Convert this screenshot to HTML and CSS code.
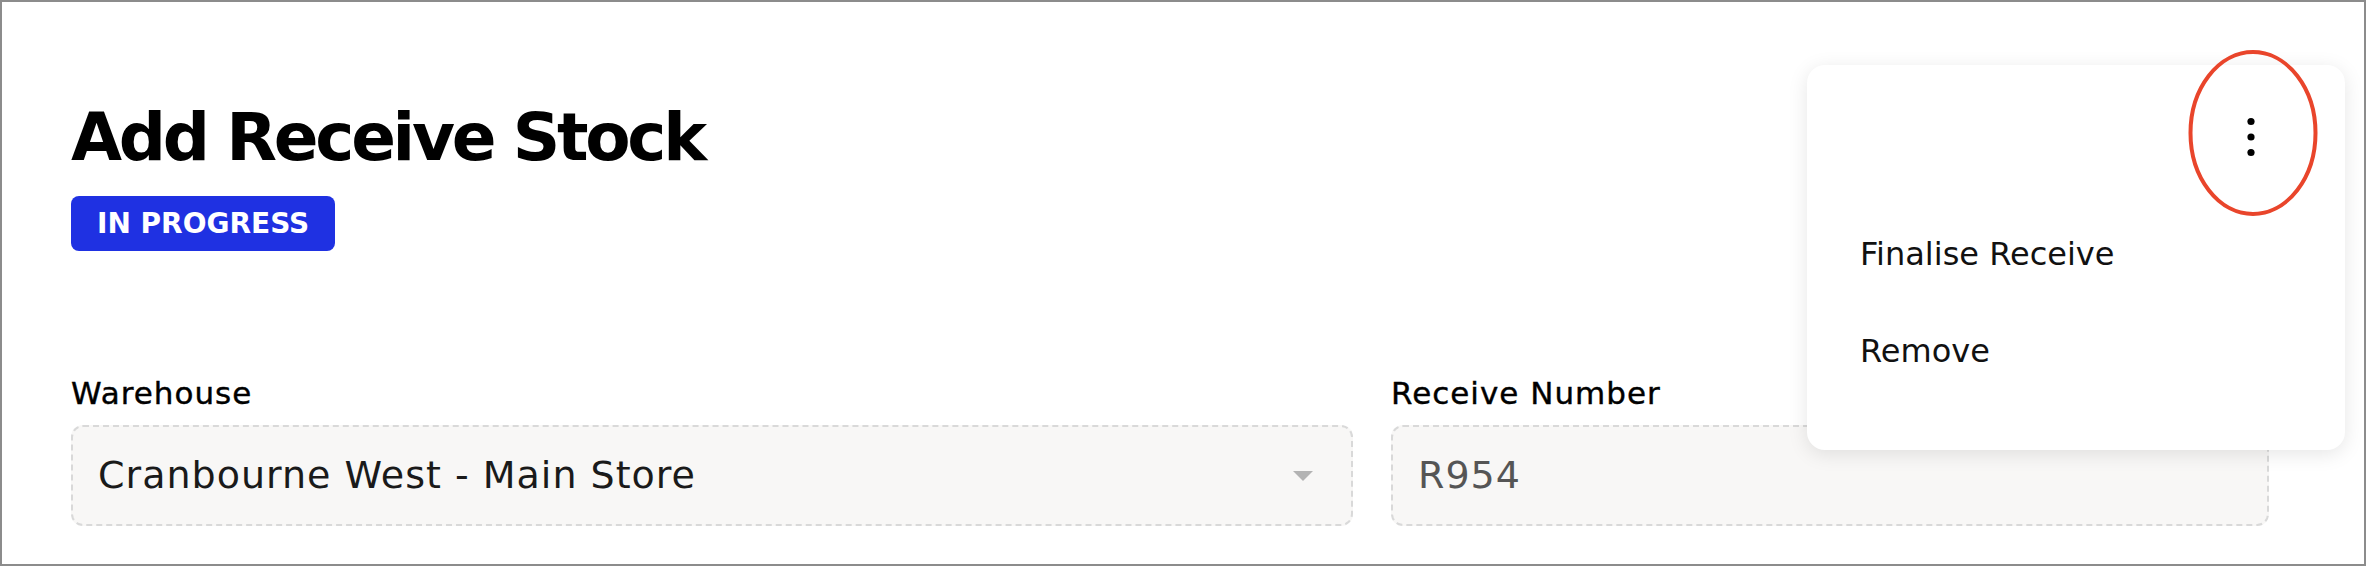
FILE: index.html
```html
<!DOCTYPE html>
<html lang="en">
<head>
    <meta charset="UTF-8">
    <meta name="viewport" content="width=device-width, initial-scale=1.0">
    <title>Add Receive Stock</title>
    <link rel="stylesheet" href="styles.css">
</head>
<body>
    <div class="page">
        <h1 class="page-title">Add Receive Stock</h1>
        <span class="status-badge">IN PROGRESS</span>

        <div class="form-row">
            <div class="field">
                <label class="field-label">Warehouse</label>
                <div class="field-box select-box">
                    <span class="field-value">Cranbourne West - Main Store</span>
                    <svg class="select-arrow" width="20" height="10" viewBox="0 0 20 10">
                        <path d="M0 0 H20 L10 10 Z" fill="#b3b3b3"/>
                    </svg>
                </div>
            </div>
            <div class="field">
                <label class="field-label">Receive Number</label>
                <div class="field-box">
                    <span class="field-value muted">R954</span>
                </div>
            </div>
        </div>

        <!-- actions dropdown, opened -->
        <div class="action-menu">
            <div class="menu-header">
                <button class="kebab" aria-label="More actions">
                    <svg width="28" height="46" viewBox="0 0 28 46">
                        <circle cx="14" cy="7.5" r="3.6" fill="#000"/>
                        <circle cx="14" cy="23" r="3.6" fill="#000"/>
                        <circle cx="14" cy="38.5" r="3.6" fill="#000"/>
                    </svg>
                </button>
            </div>
            <div class="menu-item">Finalise Receive</div>
            <div class="menu-item">Remove</div>
        </div>

        <!-- highlight ring around the kebab button -->
        <svg class="highlight-ring" width="136" height="172" viewBox="0 0 136 172">
            <ellipse cx="68" cy="86" rx="62.5" ry="81" fill="none" stroke="#e9452b" stroke-width="4"/>
        </svg>
    </div>
</body>
</html>
```

FILE: styles.css
```css
* {
    margin: 0;
    padding: 0;
    box-sizing: border-box;
}

body {
    font-family: 'DejaVu Sans', 'Noto Sans', sans-serif;
    background-color: #fff;
    color: #111;
}

.page {
    position: relative;
    width: 2366px;
    height: 566px;
    border: 2px solid #8c8c8c;
    padding: 103px 95px 0 69px;
    overflow: hidden;
}

.page-title {
    font-size: 66px;
    line-height: 66px;
    font-weight: bold;
    letter-spacing: -3.3px;
    color: #000;
}

.status-badge {
    display: inline-block;
    margin-top: 25px;
    height: 55px;
    line-height: 55px;
    padding: 0 26px;
    background-color: #1f31e2;
    color: #fff;
    font-size: 28px;
    font-weight: bold;
    border-radius: 8px;
}

.form-row {
    display: grid;
    grid-template-columns: 1282fr 878fr;
    gap: 38px;
    margin-top: 124px;
}

.field {
    display: flex;
    flex-direction: column;
    gap: 13px;
}

.field-label {
    font-size: 31px;
    line-height: 1.2;
    letter-spacing: 1px;
    color: #000;
    -webkit-text-stroke: 0.4px #000;
}

.field-box {
    display: flex;
    align-items: center;
    height: 101px;
    padding: 0 38px 0 25px;
    background-color: #f8f7f6;
    border: 2px dashed #d9d9d9;
    border-radius: 12px;
}

.select-box {
    justify-content: space-between;
}

.field-value {
    font-size: 38px;
    line-height: 1.2;
    letter-spacing: 1px;
    color: #1a1a1a;
}

.field-value.muted {
    color: #555;
}

.select-arrow {
    flex-shrink: 0;
}

.action-menu {
    position: absolute;
    top: 63px;
    left: 1805px;
    width: 538px;
    padding-bottom: 50px;
    background-color: #fff;
    border-radius: 18px;
    box-shadow: 0 4px 20px rgba(0, 0, 0, 0.1);
}

.menu-header {
    display: flex;
    justify-content: flex-end;
    align-items: center;
    height: 141px;
    padding: 3px 80px 0 0;
}

.kebab {
    display: flex;
    background: none;
    border: none;
    cursor: pointer;
}

.menu-item {
    display: flex;
    align-items: center;
    height: 97px;
    padding-left: 53px;
    font-size: 32px;
    line-height: 1.2;
    color: #111;
    cursor: pointer;
}

.highlight-ring {
    position: absolute;
    top: 45px;
    left: 2183px;
    pointer-events: none;
}
```
